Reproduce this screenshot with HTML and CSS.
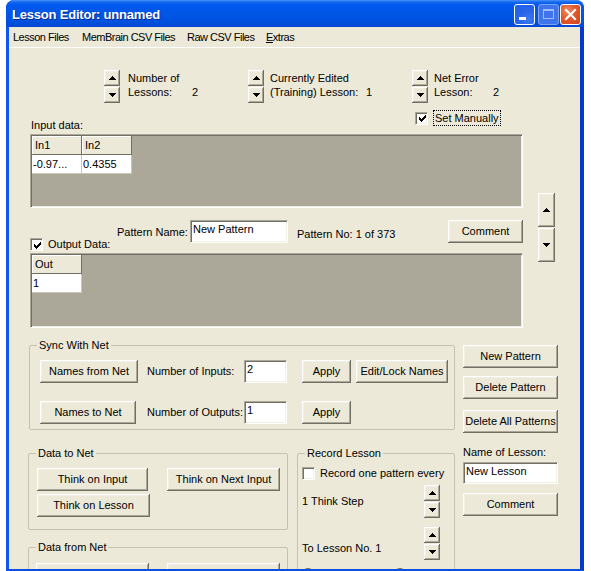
FILE: index.html
```html
<!DOCTYPE html>
<html>
<head>
<meta charset="utf-8">
<title>Lesson Editor</title>
<link rel="stylesheet" href="styles.css">
</head>
<body>
<div class="window">
  <div class="titlebar">
    <span class="title">Lesson Editor: unnamed</span>
    <span class="cbtn cmin"><svg width="19" height="19" viewBox="0 0 19 19"><rect x="4" y="12" width="7" height="3" fill="#fff"/></svg></span>
    <span class="cbtn cmax"><svg width="19" height="19" viewBox="0 0 19 19"><rect x="4.5" y="4.5" width="10" height="9" fill="none" stroke="#9fbcf5" stroke-width="1"/><rect x="4" y="4" width="11" height="2" fill="#9fbcf5"/></svg></span>
    <span class="cbtn cclose"><svg width="19" height="19" viewBox="0 0 19 19"><path d="M5 5L14 14M14 5L5 14" stroke="#fff" stroke-width="2.2" stroke-linecap="square"/></svg></span>
  </div>
  <div class="frame">
    <div class="menubar">
      <span>Lesson Files</span>
      <span>MemBrain CSV Files</span>
      <span>Raw CSV Files</span>
      <span><u>E</u>xtras</span>
    </div>
    <div class="content">
      <div class="top">
        <div class="topmain">
          <div class="spinrow">
            <div class="sgroup g1">
              <div class="spin">
                <span class="sbtn"><svg class="arr" width="7" height="4" viewBox="0 0 7 4"><path d="M3 0h1v1h1v1h1v1h1v1h-7v-1h1v-1h1v-1h1z"/></svg></span>
                <span class="sbtn"><svg class="arr" width="7" height="4" viewBox="0 0 7 4"><path d="M0 0h7v1h-1v1h-1v1h-1v1h-1v-1h-1v-1h-1v-1h-1z"/></svg></span>
              </div>
              <div class="slabel l1"><div>Number of</div><div><span class="key k1">Lessons:</span>2</div></div>
            </div>
            <div class="sgroup g2">
              <div class="spin">
                <span class="sbtn"><svg class="arr" width="7" height="4" viewBox="0 0 7 4"><path d="M3 0h1v1h1v1h1v1h1v1h-7v-1h1v-1h1v-1h1z"/></svg></span>
                <span class="sbtn"><svg class="arr" width="7" height="4" viewBox="0 0 7 4"><path d="M0 0h7v1h-1v1h-1v1h-1v1h-1v-1h-1v-1h-1v-1h-1z"/></svg></span>
              </div>
              <div class="slabel l2"><div>Currently Edited</div><div><span class="key k2">(Training) Lesson:</span>1</div></div>
            </div>
            <div class="sgroup g3">
              <div class="spin">
                <span class="sbtn"><svg class="arr" width="7" height="4" viewBox="0 0 7 4"><path d="M3 0h1v1h1v1h1v1h1v1h-7v-1h1v-1h1v-1h1z"/></svg></span>
                <span class="sbtn"><svg class="arr" width="7" height="4" viewBox="0 0 7 4"><path d="M0 0h7v1h-1v1h-1v1h-1v1h-1v-1h-1v-1h-1v-1h-1z"/></svg></span>
              </div>
              <div class="slabel l3"><div>Net Error</div><div><span class="key k3">Lesson:</span>2</div></div>
            </div>
          </div>
          <div class="inrow">
            <span class="inlabel">Input data:</span>
            <div class="chkitem">
              <span class="chk"><svg width="9" height="9" viewBox="0 0 9 9"><path d="M1 3h1v3H1z M2 4h1v3H2z M3 5h1v3H3z M4 4h1v3H4z M5 3h1v3H5z M6 2h1v3H6z M7 1h1v3H7z"/></svg></span>
              <span class="focus">Set Manually</span>
            </div>
          </div>
          <div class="grid gin">
            <div class="cells c2">
              <div class="cell hcell">In1</div>
              <div class="cell hcell">In2</div>
              <div class="cell dcell">-0.97...</div>
              <div class="cell dcell">0.4355</div>
            </div>
          </div>
          <div class="patrow">
            <div class="oditem">
              <span class="chk"><svg width="9" height="9" viewBox="0 0 9 9"><path d="M1 3h1v3H1z M2 4h1v3H2z M3 5h1v3H3z M4 4h1v3H4z M5 3h1v3H5z M6 2h1v3H6z M7 1h1v3H7z"/></svg></span>
              <span class="odlabel">Output Data:</span>
            </div>
            <span class="pnlabel">Pattern Name:</span>
            <div class="edit pnedit">New Pattern</div>
            <span class="pno">Pattern No: 1 of 373</span>
            <div class="btn pcomment">Comment</div>
          </div>
          <div class="grid gout">
            <div class="cells c1">
              <div class="cell hcell">Out</div>
              <div class="cell dcell">1</div>
            </div>
          </div>
        </div>
        <div class="vscroll">
          <span class="sbtn tall"><svg class="arr" width="7" height="4" viewBox="0 0 7 4"><path d="M3 0h1v1h1v1h1v1h1v1h-7v-1h1v-1h1v-1h1z"/></svg></span>
          <span class="sbtn tall"><svg class="arr" width="7" height="4" viewBox="0 0 7 4"><path d="M0 0h7v1h-1v1h-1v1h-1v1h-1v-1h-1v-1h-1v-1h-1z"/></svg></span>
        </div>
      </div>

      <div class="bottom">
        <div class="bleft">
          <fieldset class="group sync">
            <legend>Sync With Net</legend>
            <div class="syncgrid">
              <div class="btn w98">Names from Net</div>
              <span class="lbl">Number of Inputs:</span>
              <div class="edit">2</div>
              <div class="btn apply">Apply</div>
              <div class="btn w92">Edit/Lock Names</div>
              <div class="btn w96">Names to Net</div>
              <span class="lbl">Number of Outputs:</span>
              <div class="edit">1</div>
              <div class="btn apply">Apply</div>
            </div>
          </fieldset>
          <div class="brow">
            <div class="bcol">
              <fieldset class="group dtn">
                <legend>Data to Net</legend>
                <div class="dtngrid">
                  <div class="btn w111">Think on Input</div>
                  <div class="btn w113">Think on Next Input</div>
                  <div class="btn w113">Think on Lesson</div>
                </div>
              </fieldset>
              <fieldset class="group dfn">
                <legend>Data from Net</legend>
                <div class="dfngrid">
                  <div class="btn w113"></div>
                  <div class="btn w113"></div>
                </div>
              </fieldset>
            </div>
            <fieldset class="group rec">
              <legend>Record Lesson</legend>
              <div class="recchk">
                <span class="chk"></span>
                <span class="reclabel">Record one pattern every</span>
              </div>
              <div class="recspin ra">
                <span class="rl">1 Think Step</span>
                <div class="spin">
                  <span class="sbtn"><svg class="arr" width="7" height="4" viewBox="0 0 7 4"><path d="M3 0h1v1h1v1h1v1h1v1h-7v-1h1v-1h1v-1h1z"/></svg></span>
                  <span class="sbtn"><svg class="arr" width="7" height="4" viewBox="0 0 7 4"><path d="M0 0h7v1h-1v1h-1v1h-1v1h-1v-1h-1v-1h-1v-1h-1z"/></svg></span>
                </div>
              </div>
              <div class="recspin rb">
                <span class="rl">To Lesson No. 1</span>
                <div class="spin">
                  <span class="sbtn"><svg class="arr" width="7" height="4" viewBox="0 0 7 4"><path d="M3 0h1v1h1v1h1v1h1v1h-7v-1h1v-1h1v-1h1z"/></svg></span>
                  <span class="sbtn"><svg class="arr" width="7" height="4" viewBox="0 0 7 4"><path d="M0 0h7v1h-1v1h-1v1h-1v1h-1v-1h-1v-1h-1v-1h-1z"/></svg></span>
                </div>
              </div>
              <div class="radios">
                <span class="radio"></span>
                <span class="radio r2"></span>
              </div>
            </fieldset>
          </div>
        </div>
        <div class="bright">
          <div class="btn rb1">New Pattern</div>
          <div class="btn rb2">Delete Pattern</div>
          <div class="btn rb3">Delete All Patterns</div>
          <span class="nol">Name of Lesson:</span>
          <div class="edit noledit">New Lesson</div>
          <div class="btn rb4">Comment</div>
        </div>
      </div>
    </div>
  </div>
</div>
</body>
</html>
```

FILE: styles.css
```css
html, body {
  margin: 0;
  padding: 0;
  background: #fff;
  overflow: hidden;
}
body {
  font-family: "Liberation Sans", Arial, sans-serif;
  font-size: 11px;
  color: #000;
}
.window {
  margin-left: 6px;
  width: 578px;
  height: 571px;
  display: flex;
  flex-direction: column;
  border-radius: 8px 8px 0 0;
  overflow: hidden;
  background: #0a50e0;
}
.titlebar {
  height: 27px;
  flex: none;
  box-sizing: border-box;
  padding: 4px 3px 0 6px;
  display: flex;
  align-items: flex-start;
  background: linear-gradient(#4a93fa 0, #1468ee 2px, #0058ee 5px, #0056e7 12px, #0053e1 20px, #0248d4 27px);
}
.title {
  flex: 1;
  color: #fff;
  font-weight: bold;
  font-size: 13px;
  letter-spacing: -0.2px;
  line-height: 21px;
  text-shadow: 1px 1px #0b2a8c;
}
.cbtn {
  width: 21px;
  height: 21px;
  box-sizing: border-box;
  border: 1px solid #fff;
  border-radius: 3px;
  display: flex;
  align-items: center;
  justify-content: center;
}
.cmin {
  background: radial-gradient(circle at 70% 75%, #3d7bf0 0, #2a66ea 40%, #1e5fe6 100%);
  background-color: #2b67ea;
}
.cmax {
  margin-left: 3px;
  border-color: #7ea3f0;
  background: #3f74ea;
}
.cclose {
  margin-left: 1px;
  background: radial-gradient(circle at 35% 30%, #f08a62 0, #e3592f 45%, #cc421a 100%);
}
.frame {
  flex: 1;
  min-height: 0;
  display: flex;
  flex-direction: column;
  border-left: 3px solid #0b58ea;
  border-right: 4px solid #0836d0;
  border-bottom: 2px solid #0a4fe0;
  background: #ece9d8;
  overflow: hidden;
}
.menubar {
  height: 20px;
  flex: none;
  display: grid;
  grid-template-columns: 69px 105px 79px auto;
  padding-left: 4px;
  line-height: 20px;
  letter-spacing: -0.5px;
  border-bottom: 1px solid #fff;
}
.menubar u { text-decoration: underline; }
.content {
  flex: 1;
  min-height: 0;
  overflow: hidden;
  padding-top: 22px;
}

/* top part */
.top {
  display: flex;
  padding-left: 21px;
}
.topmain {
  width: 493px;
  flex: none;
}
.spinrow {
  display: flex;
  height: 33px;
  padding-left: 74px;
}
.sgroup {
  display: flex;
  align-items: flex-start;
}
.g1 { width: 144px; }
.g2 { width: 164px; }
.spin {
  display: flex;
  flex-direction: column;
  gap: 1px;
  width: 16px;
}
.sbtn {
  box-sizing: border-box;
  width: 16px;
  height: 16px;
  background: #ece9d8;
  box-shadow: inset -1px -1px #716f64, inset 1px 1px #fff, inset -2px -2px #aca899, inset 2px 2px #f1efe2;
  display: flex;
  align-items: center;
  justify-content: center;
}
.arr { display: block; fill: #000; shape-rendering: crispEdges; }
.slabel {
  line-height: 14px;
  margin-top: 1px;
}
.l1 { margin-left: 8px; }
.l2 { margin-left: 6px; }
.l3 { margin-left: 6px; }
.key { display: inline-block; }
.k1 { width: 64px; }
.k2 { width: 96px; }
.k3 { width: 59px; }

.inrow {
  display: flex;
  height: 22px;
  margin-top: 7px;
}
.inlabel {
  width: 384px;
  padding-left: 1px;
  align-self: flex-end;
  line-height: 13px;
}
.chkitem {
  display: flex;
  align-items: center;
  height: 16px;
}
.chk {
  box-sizing: border-box;
  width: 13px;
  height: 13px;
  flex: none;
  background: #fff;
  border: 1px solid;
  border-color: #aca899 #fff #fff #aca899;
  box-shadow: inset 1px 1px #716f64, inset -1px -1px #f1efe2;
  display: flex;
  align-items: center;
  justify-content: center;
}
.chk svg { display: block; fill: #000; shape-rendering: crispEdges; margin: 1px 0 0 1px; }
.focus {
  margin-left: 5px;
  border: 1px dotted #000;
  padding: 0 1px;
  line-height: 14px;
}

.grid {
  box-sizing: border-box;
  width: 493px;
  background: #aca899;
  border: 1px solid;
  border-color: #aca899 #fff #fff #aca899;
  box-shadow: inset 1px 1px #716f64, inset -1px -1px #f1efe2;
  padding: 1px;
}
.gin { height: 74px; margin-top: 2px; }
.gout { height: 75px; margin-top: 1px; }
.cells {
  display: grid;
  grid-auto-rows: 19px;
}
.c2 { grid-template-columns: 50px 50px; }
.c1 { grid-template-columns: 50px; }
.cell {
  box-sizing: border-box;
  line-height: 18px;
  white-space: nowrap;
  overflow: hidden;
}
.hcell {
  background: #ece9d8;
  border-right: 1px solid #716f64;
  border-bottom: 1px solid #716f64;
  box-shadow: inset 1px 1px #fff;
  padding-left: 3px;
}
.dcell {
  background: #fff;
  border-right: 1px solid #c9c6b8;
  border-bottom: 1px solid #c9c6b8;
  padding-left: 1px;
}

.patrow {
  display: flex;
  align-items: flex-start;
  height: 32px;
  margin-top: 12px;
}
.oditem {
  width: 87px;
  align-self: flex-end;
  margin-bottom: 1px;
  display: flex;
  align-items: center;
  height: 13px;
}
.odlabel { margin-left: 5px; line-height: 13px; }
.pnlabel {
  width: 73px;
  margin-top: 6px;
  line-height: 13px;
}
.edit {
  box-sizing: border-box;
  height: 23px;
  background: #fff;
  border: 1px solid;
  border-color: #aca899 #fff #fff #aca899;
  box-shadow: inset 1px 1px #716f64, inset -1px -1px #f1efe2;
  padding: 2px 2px 0;
  line-height: 13px;
  white-space: nowrap;
  overflow: hidden;
}
.pnedit { width: 98px; }
.pno {
  margin-left: 9px;
  margin-top: 8px;
  line-height: 13px;
}
.btn {
  box-sizing: border-box;
  height: 23px;
  background: #ece9d8;
  box-shadow: inset -1px -1px #716f64, inset 1px 1px #fff, inset -2px -2px #aca899, inset 2px 2px #f1efe2;
  display: flex;
  align-items: center;
  justify-content: center;
  white-space: nowrap;
  line-height: 13px;
}
.pcomment {
  margin-left: auto;
  width: 75px;
}
.vscroll {
  display: flex;
  flex-direction: column;
  gap: 1px;
  margin-left: 15px;
  margin-top: 123px;
}
.sbtn.tall {
  width: 17px;
  height: 34px;
}

/* bottom part */
.bottom {
  display: flex;
  align-items: flex-start;
  margin-top: 11px;
  padding-left: 19px;
}
.bleft {
  width: 427px;
  flex: none;
}
.group {
  box-sizing: border-box;
  margin: 0;
  padding: 0;
  min-width: 0;
  border: 1px solid #c5c2b2;
  border-radius: 2px;
}
.group legend {
  padding: 0 2px;
  margin-left: 7px;
  line-height: 13px;
  font-size: 11px;
}
.sync {
  margin-left: 1px;
  width: 426px;
  height: 91px;
}
.syncgrid {
  display: grid;
  grid-template-columns: 107px 97px 43px 69px 92px;
  grid-template-rows: 23px 23px;
  row-gap: 18px;
  align-items: center;
  padding: 8px 0 0 10px;
}
.lbl { line-height: 13px; }
.w98 { width: 98px; }
.w96 { width: 96px; }
.w92 { width: 92px; }
.w111 { width: 111px; }
.w113 { width: 113px; }
.apply { width: 49px; margin-left: 15px; }
.brow {
  display: flex;
  align-items: flex-start;
  gap: 9px;
  margin-top: 17px;
}
.bcol { width: 260px; flex: none; }
.dtn { width: 260px; height: 83px; }
.dtngrid {
  display: grid;
  grid-template-columns: 130px 113px;
  grid-template-rows: 23px 23px;
  row-gap: 3px;
  padding: 8px 0 0 8px;
}
.dfn { width: 260px; height: 80px; margin-top: 11px; }
.dfngrid {
  display: grid;
  grid-template-columns: 131px 113px;
  padding: 9px 0 0 7px;
}
.rec { width: 158px; height: 140px; }
.recchk {
  display: flex;
  align-items: center;
  height: 13px;
  margin-top: 7px;
  padding-left: 4px;
}
.reclabel { margin-left: 5px; line-height: 13px; white-space: nowrap; }
.recspin {
  display: grid;
  grid-template-columns: 122px 16px;
  padding-left: 4px;
}
.ra { margin-top: 5px; }
.rb { margin-top: 9px; }
.rl { line-height: 13px; white-space: nowrap; }
.ra .rl { align-self: center; }
.rb .rl { align-self: end; margin-bottom: 5px; }
.radios {
  display: flex;
  margin-top: 8px;
  padding-left: 4px;
}
.radio {
  box-sizing: border-box;
  width: 12px;
  height: 12px;
  border-radius: 50%;
  background: #fff;
  border: 1px solid;
  border-color: #716f64 #fff #fff #716f64;
}
.r2 { margin-left: 80px; }

.bright {
  width: 95px;
  flex: none;
  margin-left: 8px;
  padding-top: 6px;
  display: flex;
  flex-direction: column;
}
.bright .btn { width: 95px; }
.rb2 { margin-top: 8px; }
.rb3 { margin-top: 11px; }
.nol { margin-top: 13px; line-height: 13px; }
.noledit { margin-top: 3px; height: 22px; width: 95px; }
.rb4 { margin-top: 9px; }
```
